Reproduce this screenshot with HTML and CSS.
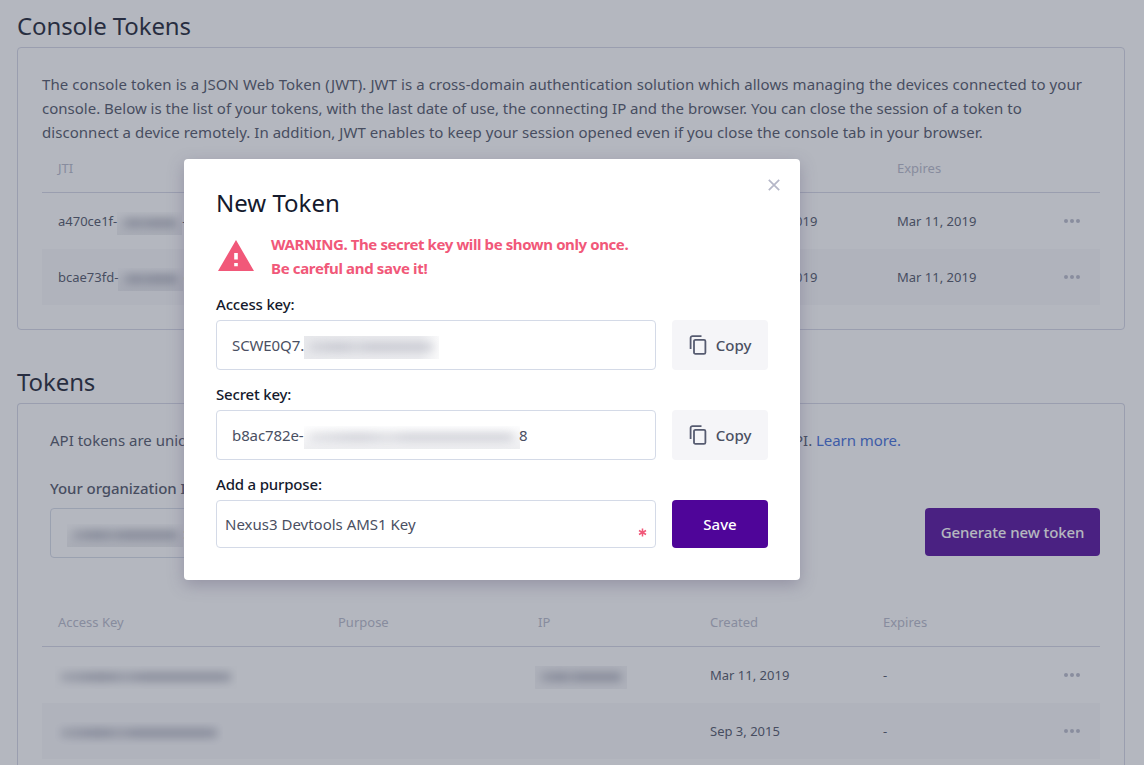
FILE: index.html
```html
<!DOCTYPE html>
<html lang="en">
<head>
<meta charset="utf-8">
<title>Tokens</title>
<link rel="stylesheet" href="styles.css">
</head>
<body>
<svg width="0" height="0" class="defs">
  <symbol id="dots" viewBox="0 0 16 4"><circle cx="2" cy="2" r="2"/><circle cx="8" cy="2" r="2"/><circle cx="14" cy="2" r="2"/></symbol>
  <symbol id="copy" viewBox="0 0 18 20"><path d="M1.6 14V3A1.9 1.9 0 0 1 3.5 1.1H12.5"/><rect x="5" y="4.8" width="11.4" height="14" rx="1.4"/></symbol>
</svg>
<main class="page">
  <h1 class="heading">Console Tokens</h1>
  <section class="card card-console">
    <p class="intro"><span class="l1">The console token is a JSON Web Token (JWT). JWT is a cross-domain authentication solution which allows managing the devices connected to your</span><br><span class="l2">console. Below is the list of your tokens, with the last date of use, the connecting IP and the browser. You can close the session of a token to</span><br><span class="l3">disconnect a device remotely. In addition, JWT enables to keep your session opened even if you close the console tab in your browser.</span></p>
    <div class="row sessions head"><span>JTI</span><span></span><span>Expires</span></div>
    <div class="row sessions"><span class="id">a470ce1f-<i class="smudge w-id"></i>-</span><span>Mar 11, 2019</span><span>Mar 11, 2019</span><svg class="dots"><use href="#dots"/></svg></div>
    <div class="row sessions alt"><span class="id">bcae73fd-<i class="smudge w-id"></i>e</span><span>Mar 11, 2019</span><span>Mar 11, 2019</span><svg class="dots"><use href="#dots"/></svg></div>
  </section>
  <h1 class="heading second">Tokens</h1>
  <section class="card card-api">
    <div class="api-text"><span>API tokens are unique</span><span class="api-end">API. <a class="link">Learn more.</a></span></div>
    <div class="org-label">Your organization ID:</div>
    <div class="org">
      <div class="org-input"><i class="smudge w-org"></i>:</div>
      <button class="btn generate">Generate new token</button>
    </div>
    <div class="row keys head"><span>Access Key</span><span>Purpose</span><span>IP</span><span>Created</span><span>Expires</span></div>
    <div class="row keys"><span><i class="smudge w-key"></i></span><span></span><span><i class="smudge w-ip"></i></span><span>Mar 11, 2019</span><span>-</span><svg class="dots"><use href="#dots"/></svg></div>
    <div class="row keys alt"><span><i class="smudge w-key2"></i></span><span></span><span></span><span>Sep 3, 2015</span><span>-</span><svg class="dots"><use href="#dots"/></svg></div>
  </section>
</main>
<div class="overlay">
  <div class="modal">
    <svg class="close" viewBox="0 0 12 12"><path d="M.8.8 11.2 11.2M11.2.8.8 11.2"/></svg>
    <h2 class="title">New Token</h2>
    <div class="warning">
      <svg class="triangle" viewBox="0 0 36 31"><path fill-rule="evenodd" d="M18 0 36 31H0ZM16.2 13V19.5H19.8V13ZM16.2 23V26.3H19.8V23Z"/></svg>
      <p class="warning-text"><span class="w1">WARNING. The secret key will be shown only once.</span><br><span class="w2">Be careful and save it!</span></p>
    </div>
    <div class="label">Access key:</div>
    <div class="field"><div class="input"><span class="k1">SCWE0Q7.</span><i class="smudge w-access"></i></div><button class="btn copy"><svg><use href="#copy"/></svg><span>Copy</span></button></div>
    <div class="label">Secret key:</div>
    <div class="field"><div class="input"><span class="k2">b8ac782e-</span><i class="smudge w-secret"></i><span class="tail">8</span></div><button class="btn copy"><svg><use href="#copy"/></svg><span>Copy</span></button></div>
    <div class="label">Add a purpose:</div>
    <div class="field last"><div class="input purpose"><span>Nexus3 Devtools AMS1 Key</span><svg class="star" viewBox="0 0 10 10"><path d="M5 .5V9.5M1.1 2.8 8.9 7.2M8.9 2.8 1.1 7.2"/></svg></div><button class="btn save">Save</button></div>
  </div>
</div>
</body>
</html>
```
FILE: styles.css
```css
* { box-sizing: border-box; }
body {
  margin: 0;
  height: 765px;
  overflow: hidden;
  background: #fff;
  color: #4a4f62;
  font: 15px/24px "Noto Sans", "Open Sans", sans-serif;
}
h1, h2, p { margin: 0; font-weight: 400; }
.defs { position: absolute; }
.page { height: 765px; overflow: hidden; padding: 9px 19px 0 17px; }
.heading { height: 38px; font-size: 24px; line-height: 34px; letter-spacing: -.1px; color: #151a2d; white-space: nowrap; }
.second { margin-top: 26px; height: 47px; line-height: 51px; }
.card { border: 1px solid #d4d6e5; border-radius: 4px; padding: 0 24px; }
.card-console { height: 283px; padding-top: 24px; }
.card-api { height: 362px; padding-top: 24px; border-bottom: 0; border-radius: 4px 4px 0 0; }
.intro { height: 72px; white-space: nowrap; }
.l1 { letter-spacing: .083px; }
.l3 { letter-spacing: .042px; }
.row { display: grid; height: 56px; align-items: center; padding: 0 20px 0 16px; font-size: 13px; white-space: nowrap; }
.row > span { display: flex; align-items: center; }
.sessions { grid-template-columns: 680px 159px 1fr 16px; }
.sessions.head { height: 49px; padding-bottom: 1px; }
.keys { grid-template-columns: 280px 200px 172px 173px 1fr 16px; }
.head { height: 48px; color: #b5b7c8; border-bottom: 1px solid #d4d6e5; }
.keys.head { height: 49px; padding-bottom: 1px; }
.alt { background: #f9f9fb; }
.dots { width: 16px; height: 4px; fill: #b8bac9; }
.api-text { display: flex; justify-content: space-between; padding: 0 199px 0 8px; white-space: nowrap; }
.api-end { letter-spacing: -.05px; }
.org-label { margin: 24px 0 8px 8px; font-weight: 500; letter-spacing: -.06px; }
.link { color: #3a68d8; }
.org { display: flex; justify-content: space-between; height: 90px; padding-left: 8px; }
.org-input { display: flex; align-items: center; width: 400px; height: 50px; border: 1px solid #d4dae7; border-radius: 4px; padding-left: 16px; }
.btn { display: flex; align-items: center; justify-content: center; border: 0; border-radius: 4px; padding: 0; font: 500 15px/24px "Noto Sans", "Open Sans", sans-serif; color: #fff; background: #4f0599; white-space: nowrap; }
.generate { width: 175px; height: 48px; letter-spacing: -.1px; }
.overlay { position: absolute; inset: 0; background: rgba(68, 75, 95, .4); }
.modal {
  position: absolute; left: 184px; top: 159px; width: 616px; height: 421px;
  padding: 28px 32px 32px; background: #fff; border-radius: 4px;
  box-shadow: 0 5px 16px rgba(90, 80, 115, .35);
}
.close { position: absolute; right: 20px; top: 20px; width: 12px; height: 12px; fill: none; stroke: #b5b7c8; stroke-width: 1.7; }
.title { height: 45px; font-size: 24px; line-height: 32px; color: #151a2d; }
.warning { display: flex; height: 60px; gap: 17px; padding-left: 2px; color: #f15879; white-space: nowrap; }
.warning-text { font-size: 15px; font-weight: 700; letter-spacing: -.4px; }
.w2 { letter-spacing: -.34px; }
.triangle { width: 36px; height: 31px; margin-top: 8px; fill: #f15879; }
.label { height: 28px; color: #151a2d; font-weight: 500; letter-spacing: -.18px; }
.field { display: flex; gap: 16px; height: 62px; }
.input { display: flex; align-items: center; width: 440px; height: 50px; border: 1px solid #d4dae7; border-radius: 4px; padding: 0 8px 0 15px; white-space: nowrap; }
.k1, .k2 { width: 72px; letter-spacing: -.1px; }
.tail { margin-left: -1px; }
.copy { width: 96px; height: 50px; gap: 9px; color: #4a4f62; background: #f5f5f8; }
.copy svg { width: 18px; height: 20px; fill: none; stroke: #565b70; stroke-width: 1.8; }
.last { height: 48px; }
.purpose { height: 48px; padding-left: 8px; justify-content: space-between; }
.star { width: 9px; height: 9px; margin-top: 16px; fill: none; stroke: #f15879; stroke-width: 1.7; }
.save { width: 96px; height: 48px; }
/* Redacted values */
.smudge { display: inline-block; flex: none; height: 23px; margin-top: 4px; padding: 6px 5px; background: linear-gradient(rgba(110, 114, 135, .01), rgba(110, 114, 135, .12)); overflow: hidden; }
.smudge::before { content: ""; display: block; height: 10px; border-radius: 4px; background: linear-gradient(90deg, rgba(80, 84, 110, .2), rgba(80, 84, 110, .36) 20% 28%, rgba(80, 84, 110, .25) 38%, rgba(80, 84, 110, .36) 48% 95%, rgba(80, 84, 110, .25)); filter: blur(4px); }
.w-id { width: 65px; }
.w-org { width: 116px; }
.w-key { width: 182px; margin-left: -3px; background: none; }
.w-key2 { width: 168px; margin-left: -3px; background: none; }
.w-ip { width: 92px; margin-left: -3px; background: rgba(110, 114, 135, .07); }
.w-access { width: 135px; background: linear-gradient(90deg, rgba(110, 114, 135, .16), rgba(110, 114, 135, .14) 85%, rgba(110, 114, 135, .04)); }
.w-access::before, .w-secret::before { opacity: .55; }
.w-secret { width: 216px; }
```
